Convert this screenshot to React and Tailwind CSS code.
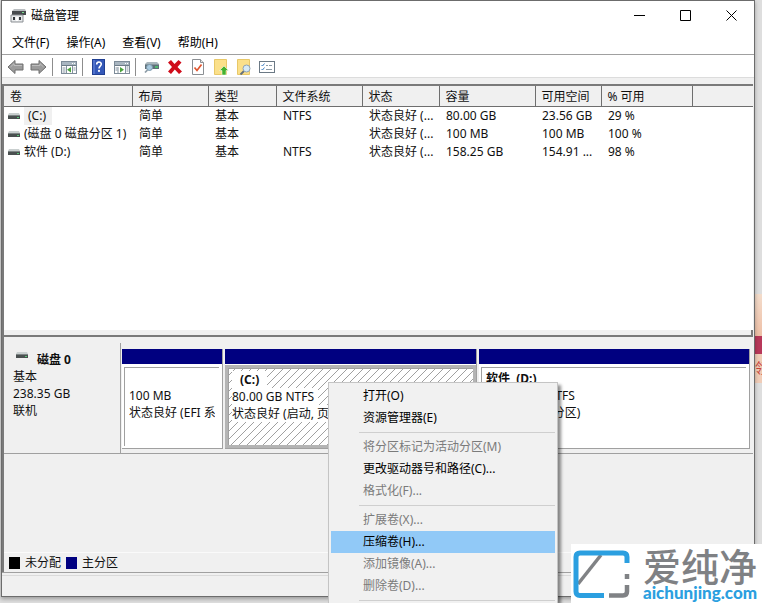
import React from "react";

const menus = ["文件(F)", "操作(A)", "查看(V)", "帮助(H)"];

const columns = [
  { title: "卷", width: "w-[128px]" },
  { title: "布局", width: "w-[76px]" },
  { title: "类型", width: "w-[68px]" },
  { title: "文件系统", width: "w-[86px]" },
  { title: "状态", width: "w-[77px]" },
  { title: "容量", width: "w-[96px]" },
  { title: "可用空间", width: "w-[66px]" },
  { title: "% 可用", width: "w-[91px]" },
];

const volumes = [
  ["(C:)", "简单", "基本", "NTFS", "状态良好 (...", "80.00 GB", "23.56 GB", "29 %"],
  ["(磁盘 0 磁盘分区 1)", "简单", "基本", "", "状态良好 (...", "100 MB", "100 MB", "100 %"],
  ["软件 (D:)", "简单", "基本", "NTFS", "状态良好 (...", "158.25 GB", "154.91 ...", "98 %"],
];

const contextGroups = [
  [
    { label: "打开(O)" },
    { label: "资源管理器(E)" },
  ],
  [
    { label: "将分区标记为活动分区(M)", disabled: true },
    { label: "更改驱动器号和路径(C)..." },
    { label: "格式化(F)...", disabled: true },
  ],
  [
    { label: "扩展卷(X)...", disabled: true },
    { label: "压缩卷(H)...", active: true },
    { label: "添加镜像(A)...", disabled: true },
    { label: "删除卷(D)...", disabled: true },
  ],
];

function DriveIcon() {
  return (
    <svg width="14" height="8" viewBox="0 0 14 8" className="shrink-0">
      <path d="M2 1h10l1 2H1z" fill="#c9cfcf" />
      <rect x="1" y="3" width="12" height="4" fill="#4a5050" />
      <rect x="1" y="3" width="12" height="1" fill="#7d8585" />
      <rect x="10" y="5" width="2" height="1" fill="#58c878" />
    </svg>
  );
}

function AppIcon() {
  return (
    <svg width="16" height="16" viewBox="0 0 16 16">
      <path d="M4 1h11l1 2H2z" fill="#b9bdc0" />
      <rect x="2" y="3" width="14" height="4" fill="#474b4e" />
      <rect x="12" y="4" width="2" height="1" fill="#7adf8e" />
      <path d="M1 7h12v7H1z" fill="#e8eaec" stroke="#8b8f93" />
      <path d="M3 9h2v3H3zM9 9h2v3H9z" fill="#33373b" />
      <path d="M6 9h2v4H6z" fill="#fff" />
    </svg>
  );
}

function Arrow({ flip }) {
  return (
    <svg width="17" height="16" viewBox="0 0 17 16" className={flip ? "-scale-x-100" : ""}>
      <path d="M1 8l7-6.5V5h8v6H8v3.5z" fill="#9b9b9b" stroke="#6f6f6f" />
      <path d="M3.5 8L7 4.6V6.5h8" fill="none" stroke="#bdbdbd" />
    </svg>
  );
}

function PaneIcon({ right }) {
  return (
    <svg width="16" height="16" viewBox="0 0 16 16">
      <rect x="0.5" y="2.5" width="15" height="12" fill="#fff" stroke="#7d8b98" />
      <rect x="1" y="3" width="14" height="3" fill="#a9b6c1" />
      <path d="M1 6.5h14" stroke="#6d7b87" />
      <path d="M11 4.5h1M13 4.5h1" stroke="#fff" />
      {right ? (
        <>
          <path d="M4 8v6M12.5 8h2M12.5 10h2M12.5 12h2M1.5 9h2M1.5 11h2" stroke="#8493a0" />
          <path d="M11.5 7v7" stroke="#8493a0" />
          <path d="M6 8l4 2.7L6 13.5z" fill="#4aa33c" />
        </>
      ) : (
        <>
          <path d="M1.5 9h3M1.5 11h3M1.5 13h3M5.5 7v7M12.5 9h2M12.5 11h2M11.5 7v7" stroke="#8493a0" />
          <path d="M10 8l-4 2.7 4 2.8z" fill="#4aa33c" />
        </>
      )}
    </svg>
  );
}

function HelpIcon() {
  return (
    <svg width="16" height="16" viewBox="0 0 16 16">
      <rect x="1.5" y="0.5" width="12" height="15" fill="#3458b8" stroke="#203f92" />
      <path d="M3 1v14" stroke="#6d8be0" />
      <path d="M5.7 5.4c0-3.1 4.6-3 4.6-.3 0 2-2.300 2-2.300 4.300" fill="none" stroke="#fff" strokeWidth="1.6" />
      <circle cx="8" cy="11.9" r="1.1" fill="#fff" />
    </svg>
  );
}

function RescanIcon() {
  return (
    <svg width="16" height="16" viewBox="0 0 16 16">
      <path d="M3 3h10l2 2H1z" fill="#a9b6bc" />
      <rect x="1" y="5" width="14" height="5" fill="#5f7078" />
      <rect x="1" y="5" width="14" height="1" fill="#87979e" />
      <rect x="11" y="7" width="3" height="2" fill="#4fb870" />
      <circle cx="5.5" cy="8.500" r="3" fill="#a7c9df" stroke="#7b98ab" />
      <path d="M3.500 11L1 13.500" stroke="#8c9ba6" strokeWidth="1.7" />
    </svg>
  );
}

function DeleteIcon() {
  return (
    <svg width="16" height="16" viewBox="0 0 16 16">
      <path d="M1 3.500l3-2.500 3.500 4 4-4 3 2.500L10.500 8l4.500 4.500-3 2.500-4.200-4.500L4 15l-3-2.500L5 8z" fill="#d00c1a" />
    </svg>
  );
}

function CheckPageIcon() {
  return (
    <svg width="16" height="16" viewBox="0 0 16 16">
      <path d="M2.500.5h8l3 3v12h-11z" fill="#fff" stroke="#8b8f93" />
      <path d="M10.500.5v3h3" fill="#e8e8e8" stroke="#8b8f93" />
      <path d="M4.500 8.500l2.500 3 4.500-6" fill="none" stroke="#e0542e" strokeWidth="1.700" />
    </svg>
  );
}

function FolderPage() {
  return (
    <>
      <path d="M1.500.5h12v15h-12z" fill="#fbe08a" stroke="#e8c868" />
      <path d="M11 9.500h2.500" stroke="#e8c868" />
    </>
  );
}

function FolderUpIcon() {
  return (
    <svg width="16" height="16" viewBox="0 0 16 16">
      <FolderPage />
      <path d="M11 7l4.500 4.500H13V16H9v-4.500H6.500z" fill="#43b12d" stroke="#fff" strokeWidth="0.500" />
    </svg>
  );
}

function FolderSearchIcon() {
  return (
    <svg width="16" height="16" viewBox="0 0 16 16">
      <FolderPage />
      <path d="M8 12L4.500 15.500" stroke="#65717c" strokeWidth="2" />
      <circle cx="10.500" cy="9.500" r="3.500" fill="#d6eaf6" stroke="#8fa3b3" />
    </svg>
  );
}

function OptionsIcon() {
  return (
    <svg width="16" height="16" viewBox="0 0 16 16">
      <rect x="0.500" y="2.500" width="15" height="11" fill="#fff" stroke="#6b7985" />
      <path d="M2.500 6l1 1 2-2.500M2.500 10l1 1 2-2.500" fill="none" stroke="#3f7fc4" />
      <path d="M7 6.500h2M10 6.500h3M7 10.500h6" stroke="#8c9aa6" />
    </svg>
  );
}

function ToolButton({ label, children }) {
  return (
    <button type="button" aria-label={label} className="flex h-[22px] w-[23px] items-center justify-center">
      {children}
    </button>
  );
}

function ToolSeparator() {
  return <div className="ml-[2px] mr-1 h-[18px] w-px bg-[#8d8d8d]" />;
}

function Hatch() {
  return (
    <svg className="absolute inset-0 h-full w-full" aria-hidden="true">
      <defs>
        <pattern id="hatch" width="8" height="8" patternUnits="userSpaceOnUse">
          <path d="M-1 9L9-1M-1 1L1-1M7 9L9 7" stroke="#959595" strokeWidth="0.900" />
        </pattern>
      </defs>
      <rect width="100%" height="100%" fill="url(#hatch)" />
    </svg>
  );
}

function Partition({ className, selected, name, size, status }) {
  return (
    <section className={"flex min-w-0 flex-col border-r border-b border-[#a0a0a0] " + className}>
      <div className="h-4 border-b border-white bg-[#000080]" />
      <div
        className={
          selected
            ? "relative flex-1 overflow-hidden border-[3px] border-[#b4b4b4] bg-white"
            : "flex-1 overflow-hidden border-2 border-white bg-white"
        }
      >
        {selected && <Hatch />}
        <div
          className={
            "relative h-full overflow-hidden whitespace-nowrap border-l border-t border-[#a0a0a0] leading-[17px] " +
            (selected ? "pl-[3px] pt-[2px]" : "mr-px pl-1 pr-1 pt-[2px]")
          }
        >
          <div className="h-[17px] font-bold">
            <span className={selected ? "inline-block bg-white px-2" : "whitespace-pre"}>{name}</span>
          </div>
          <div>
            <span className={selected ? "inline-block bg-white pr-1" : ""}>{size}</span>
          </div>
          <div className="overflow-hidden">
            <span className={selected ? "inline-block bg-white" : ""}>{status}</span>
          </div>
        </div>
      </div>
    </section>
  );
}

function ContextMenu() {
  return (
    <div
      role="menu"
      className="absolute left-[328px] top-[382px] w-[230px] border border-[#c4c4c4] bg-[#f1f1f1] p-[2px] shadow-[3px_3px_3px_rgba(0,0,0,0.45)]"
    >
      {contextGroups.map((group, index) => (
        <div key={index}>
          {group.map((item) => (
            <button
              key={item.label}
              type="button"
              role="menuitem"
              disabled={item.disabled}
              className={
                "block h-[22px] w-full whitespace-nowrap pl-8 text-left leading-[22px] " +
                (item.active ? "bg-[#91c9f7] text-black" : item.disabled ? "text-[#7b7b7b]" : "text-black")
              }
            >
              {item.label}
            </button>
          ))}
          <div className="ml-7 h-[7px] py-[3px]">
            <div className="h-px bg-[#cfcfcf]" />
          </div>
        </div>
      ))}
    </div>
  );
}

function Watermark() {
  return (
    <div className="absolute bottom-0 right-0 flex h-[59px] w-[191px] gap-3 bg-white pl-[2px] pt-1">
      <svg width="58" height="50" viewBox="0 0 58 50" className="mt-[2px] shrink-0" fill="none">
        <path d="M5 34L28 5" stroke="#808285" strokeWidth="3.500" />
        <path d="M31 45.500H7q-4 0-4-4V7q0-4 4-4h43q4 0 4 4v6" stroke="#2b9fe0" strokeWidth="5" />
        <path d="M54 24v5M54 35v6.500q0 4-4 4H36" stroke="#808285" strokeWidth="4.500" />
      </svg>
      <div className="whitespace-nowrap">
        <div className="text-[38px] font-medium leading-[36px] text-[#7f8184]">爱纯净</div>
        <div className="font-[Lato,sans-serif] text-[17px] font-black leading-[18px] text-[#2b9fe0]">aichunjing.com</div>
      </div>
    </div>
  );
}

export default function App() {
  return (
    <div className="relative flex h-screen overflow-hidden bg-[#dedede] pb-[6px] pl-px pr-[7px] font-['Noto_Sans','Noto_Sans_CJK_SC',sans-serif] text-[12px] text-[#101010]">
      <div className="absolute right-0 top-[294px] h-[89px] w-[7px] overflow-hidden bg-[#f0cdb8]">
        <div className="h-[42px] bg-linear-to-b from-[#f3dccb] to-[#eebfa6]" />
        <div className="h-[18px] bg-[#b8385a]" />
        <div className="text-[14px] leading-[28px] text-[#c8443c]">领</div>
      </div>

      <main className="relative flex min-w-0 flex-1 flex-col border border-[#6c6c6c] bg-[#f0f0f0] shadow-[0_2px_4px_rgba(0,0,0,0.3)]">
        <header className="flex h-[29px] shrink-0 items-center bg-white pl-2">
          <AppIcon />
          <h1 className="ml-[5px] flex-1 text-black">磁盘管理</h1>
          <button type="button" aria-label="最小化" className="flex h-full w-[46px] items-center justify-center">
            <svg width="11" height="11" viewBox="0 0 11 11" stroke="#000"><path d="M0 5.500h11" /></svg>
          </button>
          <button type="button" aria-label="最大化" className="flex h-full w-[46px] items-center justify-center">
            <svg width="11" height="11" viewBox="0 0 11 11" fill="none" stroke="#000"><path d="M.5.5h10v10H.5z" /></svg>
          </button>
          <button type="button" aria-label="关闭" className="flex h-full w-[46px] items-center justify-center">
            <svg width="11" height="11" viewBox="0 0 11 11" stroke="#000"><path d="M.5.5l10 10M10.500.5l-10 10" /></svg>
          </button>
        </header>

        <nav className="flex h-[25px] shrink-0 items-center gap-[17px] border-b border-[#a0a0a0] bg-white pl-[10px] pt-[2px] text-black">
          {menus.map((menu) => (
            <button key={menu} type="button" className="whitespace-nowrap">{menu}</button>
          ))}
        </nav>

        <div className="flex h-[23px] shrink-0 items-center border-b border-[#dcdcdc] bg-white pl-[2px] pt-[2px]">
          <ToolButton label="后退"><Arrow /></ToolButton>
          <ToolButton label="前进"><Arrow flip /></ToolButton>
          <ToolSeparator />
          <ToolButton label="控制台树"><PaneIcon /></ToolButton>
          <ToolSeparator />
          <ToolButton label="帮助"><HelpIcon /></ToolButton>
          <ToolButton label="操作窗格"><PaneIcon right /></ToolButton>
          <ToolSeparator />
          <ToolButton label="重新扫描"><RescanIcon /></ToolButton>
          <ToolButton label="删除"><DeleteIcon /></ToolButton>
          <ToolButton label="属性"><CheckPageIcon /></ToolButton>
          <ToolButton label="向上"><FolderUpIcon /></ToolButton>
          <ToolButton label="搜索"><FolderSearchIcon /></ToolButton>
          <ToolButton label="选项"><OptionsIcon /></ToolButton>
        </div>

        <div className="mr-px mt-1.5 flex flex-1 flex-col border-l-2 border-t-2 border-[#7a7a7a]">
          <div className="h-[244px] shrink-0 bg-white">
            <table className="w-full table-fixed border-collapse">
              <thead>
                <tr className="h-5 border-b border-[#6e6e6e] bg-[#f0f0f0]">
                  {columns.map((column) => (
                    <th
                      key={column.title}
                      className={
                        "whitespace-nowrap border-r border-[#6e6e6e] p-0 pl-1.5 pt-[2px] text-left font-normal leading-[18px] " + column.width
                      }
                    >
                      {column.title}
                    </th>
                  ))}
                  <th className="p-0" />
                </tr>
              </thead>
              <tbody>
                {volumes.map((row, rowIndex) => (
                  <tr key={row[0]} className="h-[18px]">
                    {row.map((value, index) =>
                      index === 0 ? (
                        <td key={index} className="p-0 leading-[18px]">
                          <div className="flex items-center gap-[3px] whitespace-nowrap pl-[3px]">
                            <DriveIcon />
                            <span className={rowIndex === 0 ? "bg-[#f0f0f0] pl-1 pr-1.5" : ""}>{value}</span>
                          </div>
                        </td>
                      ) : (
                        <td key={index} className="whitespace-nowrap p-0 pl-[7px] leading-[18px]">{value}</td>
                      )
                    )}
                    <td />
                  </tr>
                ))}
              </tbody>
            </table>
          </div>
          <div className="h-[7px] shrink-0 border-b-2 border-r-2 border-[#7a7a7a] bg-[#f0f0f0]" />

          <div className="mt-1.5 flex h-[111px] shrink-0 border-b border-[#a0a0a0]">
            <div className="flex w-[117px] shrink-0 flex-col border-r border-[#a0a0a0] pl-[9px] pt-2 leading-[17px]">
              <div className="flex items-start gap-2 pl-[2px] font-bold">
                <DriveIcon />
                <span>磁盘 0</span>
              </div>
              <div>基本</div>
              <div>238.35 GB</div>
              <div>联机</div>
            </div>
            <div className="mb-1 ml-px mr-[3px] mt-1.5 flex min-w-0 flex-1 gap-[2px]">
              <Partition className="w-[101px] shrink-0" name="" size="100 MB" status="状态良好 (EFI 系统分区)" />
              <Partition className="w-[252px] shrink-0" selected name="(C:)" size="80.00 GB NTFS" status="状态良好 (启动, 页面文件, 故障转储, 主分区)" />
              <Partition className="flex-1" name="软件  (D:)" size="158.25 GB NTFS" status="状态良好 (主分区)" />
            </div>
          </div>

          <div className="flex-1" />
          <div className="flex h-5 shrink-0 items-center gap-[5px] border-t border-[#fafafa] pl-[5px]">
            <span className="h-3 w-[11px] bg-black" />
            <span className="leading-[18px]">未分配</span>
            <span className="h-3 w-[11px] bg-[#000080]" />
            <span className="leading-[18px]">主分区</span>
          </div>
        </div>
        <footer className="h-6 shrink-0 border-t border-[#a0a0a0] pt-[2px]">
          <div className="h-px bg-[#dadada]" />
        </footer>
      </main>

      <ContextMenu />
      <Watermark />
    </div>
  );
}
